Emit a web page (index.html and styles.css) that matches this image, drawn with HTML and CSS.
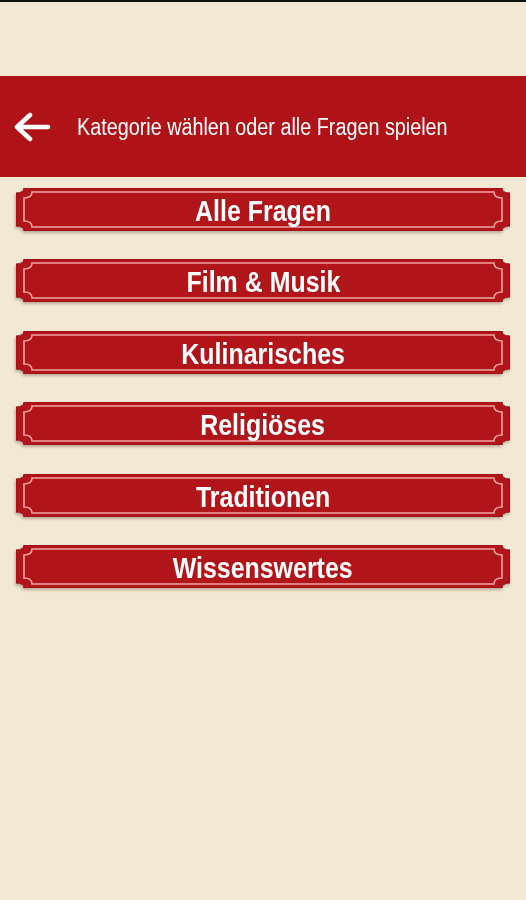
FILE: index.html
```html
<!DOCTYPE html>
<html lang="de">

<head>
  <meta charset="UTF-8">
  <meta name="viewport" content="width=device-width, initial-scale=1.0">
  <title>Kategorie wählen</title>
  <link rel="stylesheet" href="styles.css">
</head>

<body>
  <svg class="defs" width="0" height="0" aria-hidden="true">
    <symbol id="plate" viewBox="0 0 494 43">
      <path class="plate__outer" d="M8,0 H486 Q486,5 494,5 V38 Q486,38 486,43 H8 Q8,38 0,38 V5 Q8,5 8,0 Z" />
      <path class="plate__inner" d="M16,4 H478 Q478,10 486,10 V33 Q478,33 478,39 H16 Q16,33 8,33 V10 Q16,10 16,4 Z" />
    </symbol>
  </svg>

  <div class="statusbar"></div>

  <header class="toolbar">
    <a class="toolbar__back" href="#" aria-label="Zurück">
      <svg width="40" height="30" viewBox="0 0 40 30">
        <path d="M36,15 H5 M18,3 L5,15 L18,27" fill="none" stroke="#fff" stroke-width="4.5"
          stroke-linecap="round" stroke-linejoin="round" />
      </svg>
    </a>
    <h1 class="toolbar__title">Kategorie wählen oder alle Fragen spielen</h1>
  </header>

  <nav class="categories">
    <a class="category" href="#">
      <svg class="category__plate" width="494" height="43"><use href="#plate" /></svg>
      <span class="category__label">Alle Fragen</span>
    </a>
    <a class="category" href="#">
      <svg class="category__plate" width="494" height="43"><use href="#plate" /></svg>
      <span class="category__label">Film &amp; Musik</span>
    </a>
    <a class="category" href="#">
      <svg class="category__plate" width="494" height="43"><use href="#plate" /></svg>
      <span class="category__label">Kulinarisches</span>
    </a>
    <a class="category" href="#">
      <svg class="category__plate" width="494" height="43"><use href="#plate" /></svg>
      <span class="category__label">Religiöses</span>
    </a>
    <a class="category" href="#">
      <svg class="category__plate" width="494" height="43"><use href="#plate" /></svg>
      <span class="category__label">Traditionen</span>
    </a>
    <a class="category" href="#">
      <svg class="category__plate" width="494" height="43"><use href="#plate" /></svg>
      <span class="category__label">Wissenswertes</span>
    </a>
  </nav>
</body>

</html>
```

FILE: styles.css
```css
html,
body {
  height: 100%;
  box-sizing: border-box;
}

body {
  margin: 0;
  background: #f2e8d3;
  font-family: "Liberation Sans", Arial, sans-serif;
}

.defs {
  display: block;
  width: 0;
  height: 0;
  overflow: hidden;
}

.statusbar {
  height: 2px;
  background: #111;
}

.toolbar {
  display: flex;
  align-items: center;
  height: 101px;
  margin-top: 74px;
  padding-left: 12px;
  background: #b01317;
  color: #fff;
}

.toolbar__back {
  display: flex;
}

/* the app uses a condensed face; squeeze the regular one */
.toolbar__title {
  margin: 2px 0 0 25px;
  font-size: 23px;
  font-weight: normal;
  white-space: nowrap;
  transform: scaleX(0.86);
  transform-origin: left center;
}

.categories {
  display: flex;
  flex-direction: column;
  gap: 28.4px;
  padding: 11px 16px 0;
}

.category {
  display: grid;
  width: 494px;
  height: 43px;
  text-decoration: none;
}

.category__plate,
.category__label {
  grid-area: 1 / 1;
}

.category__plate {
  filter: drop-shadow(-1px 2px 1.5px rgba(70, 20, 10, 0.3));
}

.plate__outer {
  fill: #b11419;
  stroke: #97101a;
  stroke-width: 1;
}

.plate__inner {
  fill: none;
  stroke: #f0a4a2;
  stroke-width: 1.6;
}

.category__label {
  position: relative;
  align-self: center;
  justify-self: center;
  color: #fff;
  font-size: 29px;
  font-weight: bold;
  line-height: 1;
  padding-top: 4px;
  white-space: nowrap;
  transform: scaleX(0.86);
}
```
